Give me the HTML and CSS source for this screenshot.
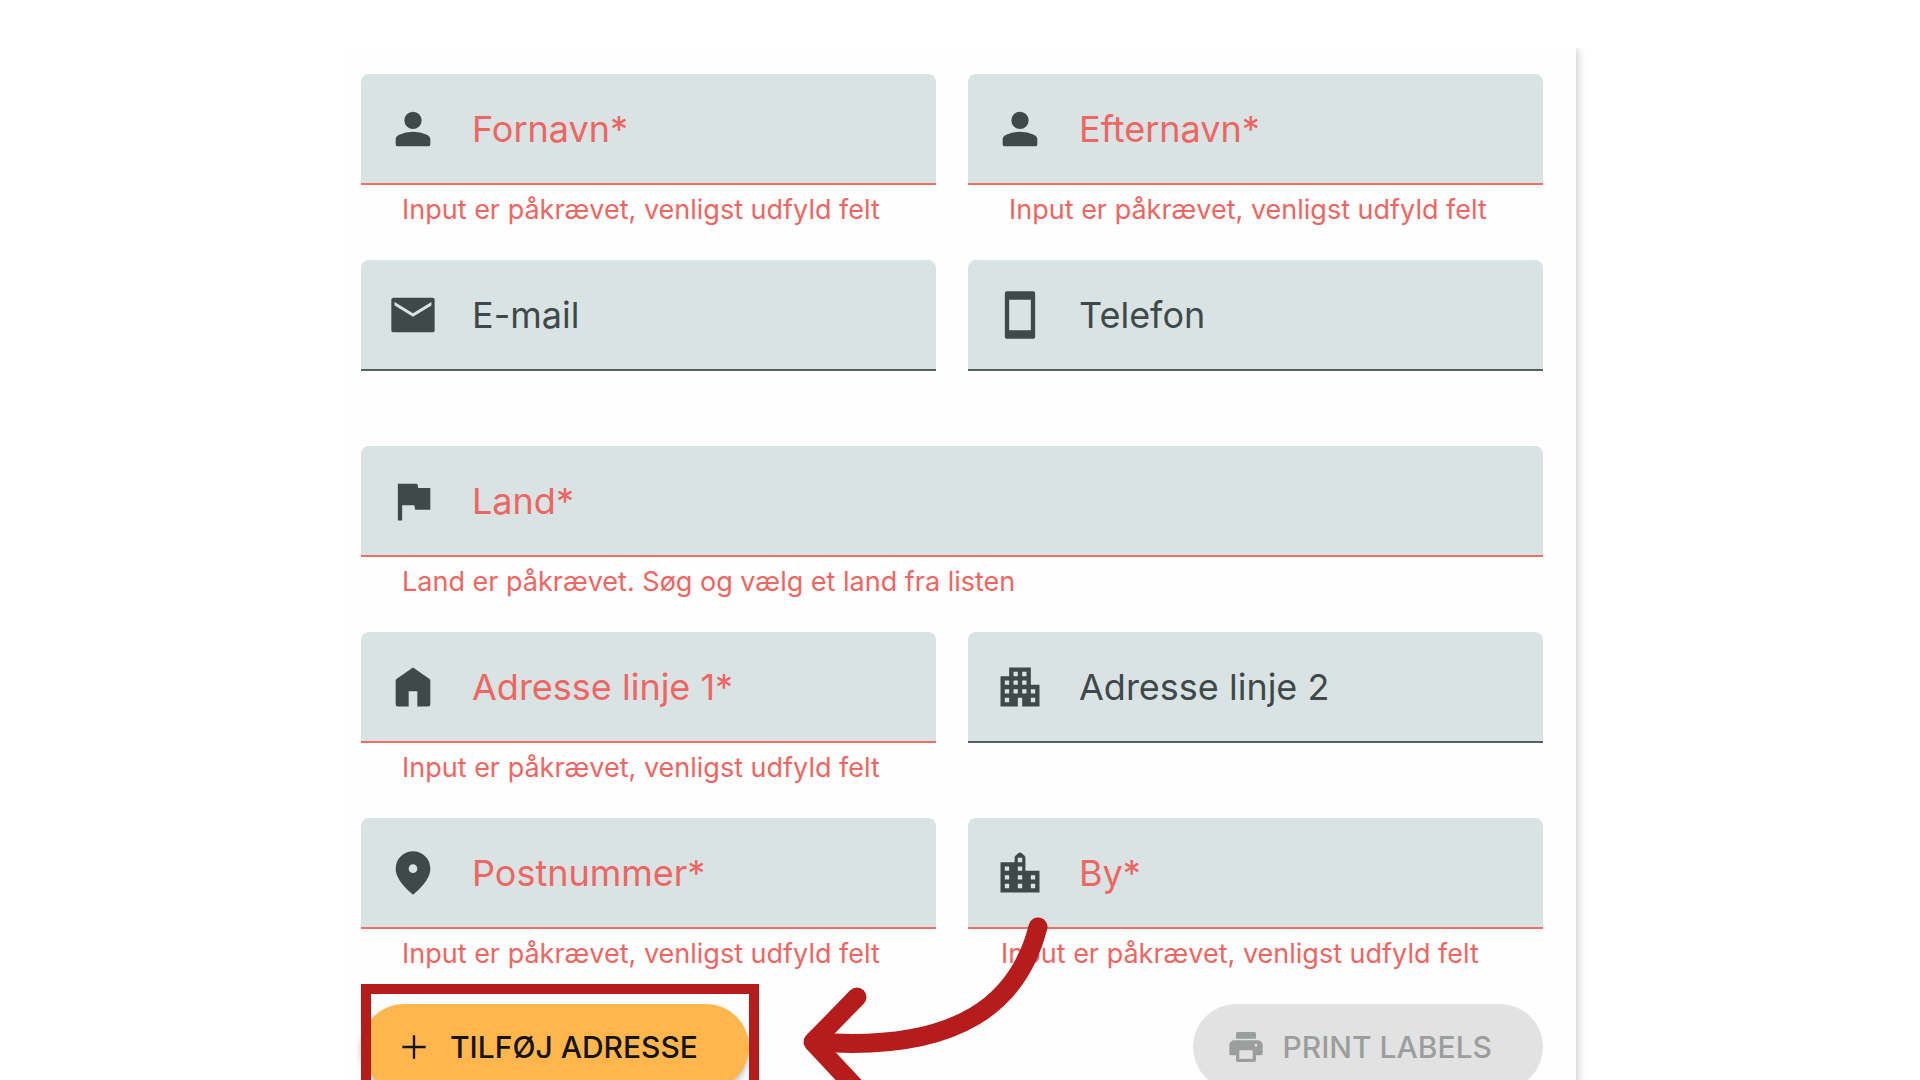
FILE: index.html
```html
<!DOCTYPE html>
<html lang="da">
<head>
  <meta charset="UTF-8">
  <meta name="viewport" content="width=device-width, initial-scale=1.0">
  <title>Tilføj adresse</title>
  <link rel="stylesheet" href="styles.css">
</head>
<body>
  <main class="panel">
    <form class="address-form">
      <div class="fields">
        <div class="field error">
          <label class="field-box">
            <svg class="icon" viewBox="0 0 24 24"><path d="M12 12a4 4 0 1 0 0-8 4 4 0 0 0 0 8zM4 17q0-1.600 1.600-2.300Q8.500 13.300 12 13.300t6.400 1.400Q20 15.400 20 17v2q0 1-1 1H5q-1 0-1-1z"/></svg>
            <span>Fornavn*</span>
            <input type="text" name="firstname">
          </label>
          <p class="message">Input er påkrævet, venligst udfyld felt</p>
        </div>
        <div class="field error">
          <label class="field-box">
            <svg class="icon" viewBox="0 0 24 24"><path d="M12 12a4 4 0 1 0 0-8 4 4 0 0 0 0 8zM4 17q0-1.600 1.600-2.300Q8.500 13.300 12 13.300t6.400 1.400Q20 15.400 20 17v2q0 1-1 1H5q-1 0-1-1z"/></svg>
            <span>Efternavn*</span>
            <input type="text" name="lastname">
          </label>
          <p class="message">Input er påkrævet, venligst udfyld felt</p>
        </div>
        <div class="field">
          <label class="field-box">
            <svg class="icon" viewBox="0 0 24 24"><path d="M21 4H3a1 1 0 0 0-1 1v14a1 1 0 0 0 1 1h18a1 1 0 0 0 1-1V5a1 1 0 0 0-1-1zm-.5 3.600L12 12.800 3.500 7.600V6l8.500 5.200L20.500 6z"/></svg>
            <span>E-mail</span>
            <input type="email" name="email">
          </label>
        </div>
        <div class="field">
          <label class="field-box">
            <svg class="icon" viewBox="0 0 24 24"><path d="M17 19H7V5h10zm1-18H6a1 1 0 0 0-1 1v20a1 1 0 0 0 1 1h12a1 1 0 0 0 1-1V2a1 1 0 0 0-1-1z"/></svg>
            <span>Telefon</span>
            <input type="tel" name="phone">
          </label>
        </div>
        <div class="field wide error">
          <label class="field-box">
            <svg class="icon" viewBox="0 0 24 24"><path d="M14.400 6 14 4H5v17h2v-7h5.600l.4 2h7V6z"/></svg>
            <span>Land*</span>
            <input type="text" name="country">
          </label>
          <p class="message">Land er påkrævet. Søg og vælg et land fra listen</p>
        </div>
        <div class="field error">
          <label class="field-box">
            <svg class="icon" viewBox="0 0 24 24"><path d="M12 3 4.500 8.200Q4 8.600 4 9.200V20q0 1 1 1h5v-7h4v7h5q1 0 1-1V9.200q0-.6-.5-1z"/></svg>
            <span>Adresse linje 1*</span>
            <input type="text" name="address1">
          </label>
          <p class="message">Input er påkrævet, venligst udfyld felt</p>
        </div>
        <div class="field">
          <label class="field-box">
            <svg class="icon" viewBox="0 0 24 24"><path d="M3 21V7h4V3h10v8h4v10h-8v-4h-2v4zm2-2h2v-2H5zm0-4h2v-2H5zm0-4h2V9H5zm4 4h2v-2H9zm0-4h2V9H9zm0-4h2V5H9zm4 8h2v-2h-2zm0-4h2V9h-2zm0-4h2V5h-2zm4 12h2v-2h-2zm0-4h2v-2h-2z"/></svg>
            <span>Adresse linje 2</span>
            <input type="text" name="address2">
          </label>
        </div>
        <div class="field error">
          <label class="field-box">
            <svg class="icon" viewBox="0 0 24 24"><path d="M12 12a2 2 0 1 0 0-4 2 2 0 0 0 0 4zm0 10q-4.025-3.425-6.012-6.363Q4 12.700 4 10.200q0-3.750 2.413-5.975Q8.825 2 12 2t5.588 2.225Q20 6.450 20 10.200q0 2.500-1.987 5.437Q16.025 18.575 12 22z"/></svg>
            <span>Postnummer*</span>
            <input type="text" name="zip">
          </label>
          <p class="message">Input er påkrævet, venligst udfyld felt</p>
        </div>
        <div class="field error">
          <label class="field-box">
            <svg class="icon" viewBox="0 0 24 24"><path d="M3 21V7h6.500V5q0-.6.4-1l1.400-1.200q.7-.5 1.400 0L14.100 4q.4.4.4 1v6H21v10zm2-2h2v-2H5zm0-4h2v-2H5zm0-4h2V9H5zm6 8h2v-2h-2zm0-4h2v-2h-2zm0-4h2V9h-2zm0-4h2V5h-2zm6 12h2v-2h-2zm0-4h2v-2h-2z"/></svg>
            <span>By*</span>
            <input type="text" name="city">
          </label>
          <p class="message city-message">Input er påkrævet, venligst udfyld felt</p>
        </div>
      </div>
      <div class="actions">
        <div class="highlight">
          <button type="button" class="btn btn-add">
            <svg class="btn-icon" viewBox="0 0 24 24"><path d="M19 12.700h-6.300V19h-1.400v-6.300H5v-1.400h6.300V5h1.400v6.300H19z"/></svg>
            TILFØJ ADRESSE
          </button>
        </div>
        <button type="button" class="btn btn-print" disabled>
          <svg class="btn-icon" viewBox="0 0 24 24"><path d="M17 3H7q-1 0-1 1v3h12V4q0-1-1-1zm2 5H5a3 3 0 0 0-3 3v5q0 1 1 1h3v3q0 1 1 1h10q1 0 1-1v-3h3q1 0 1-1v-5a3 3 0 0 0-3-3zm-3 11H8v-5h8zm2-7.300a.8.8 0 1 1 0-1.600.8.8 0 0 1 0 1.600z"/></svg>
          PRINT LABELS
        </button>
        <svg class="arrow" viewBox="800 910 260 190">
          <path d="M1038 927C1019 1001 961 1053 815 1042"/>
          <path d="M857 997 813 1042l44 47"/>
        </svg>
      </div>
    </form>
  </main>
</body>
</html>
```
FILE: styles.css
```css
* {
  box-sizing: border-box;
}
body {
  margin: 0;
  height: 100vh;
  overflow: hidden;
  background: #fff;
  font-family: Inter, Roboto, sans-serif;
  color: #404949;
}
.panel {
  max-width: 1232px;
  margin: 48px auto 0;
  padding: 26px 33px 32px 17px;
  background: #fefefe;
  box-shadow: 2px 0 8px rgba(0, 0, 0, 0.2);
  /* only the right edge keeps its shadow */
  clip-path: inset(0 -16px 0 0);
}
.fields {
  display: grid;
  grid-template-columns: repeat(2, minmax(0, 1fr));
  column-gap: 32px;
}
.field {
  min-height: 186px;
}
.wide {
  grid-column: 1 / -1;
}
.field-box {
  display: flex;
  align-items: center;
  height: 111px;
  padding: 0 26px;
  background: #dae3e3;
  border-bottom: 2px solid #566060;
  border-radius: 8px 8px 0 0;
  font-size: 36px;
  white-space: nowrap;
}
.field-box input {
  flex: 1;
  width: 0;
  min-width: 0;
  border: none;
  outline: none;
  background: transparent;
  font: inherit;
  color: #404949;
}
.icon {
  flex: none;
  width: 52px;
  height: 52px;
  margin-right: 33px;
  fill: #404949;
}
.error .field-box {
  border-bottom-color: #ef6c68;
}
.error span,
.message {
  color: #ef6562;
}
.message {
  margin: 0;
  padding: 9px 0 0 41px;
  font-size: 27px;
  line-height: 32px;
  white-space: nowrap;
}
.city-message {
  padding-left: 33px;
}
.actions {
  position: relative;
  display: flex;
  justify-content: space-between;
}
.btn {
  display: flex;
  align-items: center;
  gap: 16px;
  height: 86px;
  padding: 0 51px 0 33px;
  border: none;
  border-radius: 43px;
  font-family: inherit;
  font-size: 30px;
  font-weight: 500;
  line-height: 36px;
  white-space: nowrap;
}
.btn-icon {
  width: 40px;
  height: 40px;
  fill: currentColor;
}
.btn-add {
  background: #ffb74d;
  color: #141414;
  box-shadow: 0 4px 6px rgba(0, 0, 0, 0.25);
}
.btn-print {
  background: #e2e2e2;
  color: #9c9e9e;
}
.highlight {
  position: relative;
}
.highlight::after {
  content: "";
  position: absolute;
  inset: -20px -10px -20px 0;
  border: 10px solid #b71c1c;
  pointer-events: none;
}
.arrow {
  position: absolute;
  left: 439px;
  top: -94px;
  width: 260px;
  height: 190px;
  fill: none;
  stroke: #b71c1c;
  stroke-width: 19px;
  stroke-linecap: round;
  stroke-linejoin: round;
  pointer-events: none;
}
```
